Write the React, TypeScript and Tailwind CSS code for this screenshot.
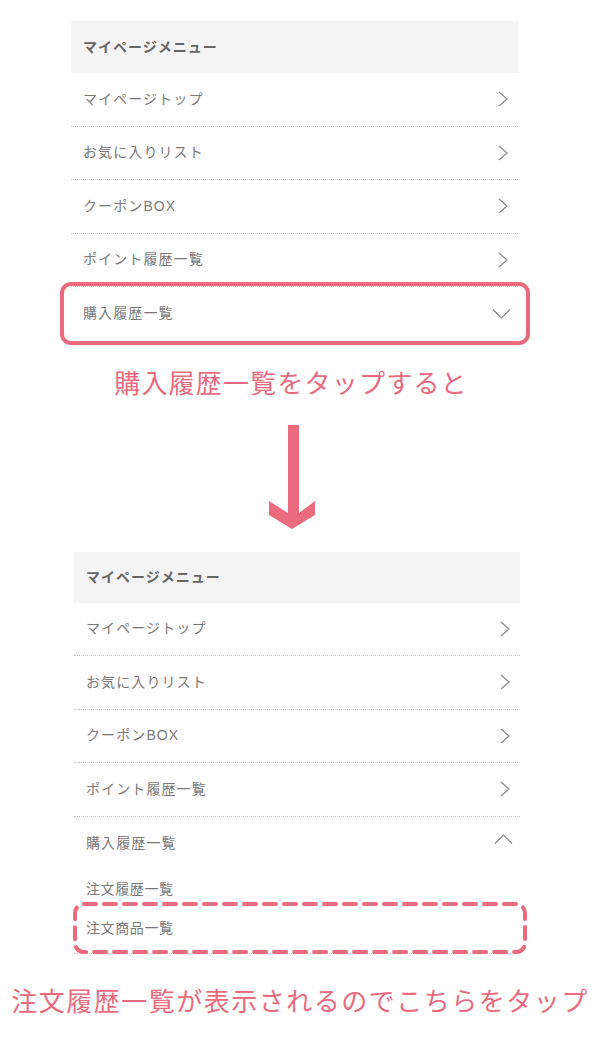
const PINK = "#ec6a7e";

function ChevronRight() {
  return (
    <svg width="12" height="16" viewBox="0 0 12 16" fill="none" className="shrink-0">
      <path d="M2 1 L10 8 L2 15" stroke="#8a8a8a" strokeWidth="1.2" />
    </svg>
  );
}

function ChevronDown() {
  return (
    <svg width="19" height="12" viewBox="0 0 19 12" fill="none" className="shrink-0">
      <path d="M1 1.5 L9.5 10 L18 1.5" stroke="#8a8a8a" strokeWidth="1.2" />
    </svg>
  );
}

function ChevronUp() {
  return (
    <svg width="19" height="12" viewBox="0 0 19 12" fill="none" className="shrink-0">
      <path d="M1 10.5 L9.5 2 L18 10.5" stroke="#8a8a8a" strokeWidth="1.2" />
    </svg>
  );
}

const items = ["マイページトップ", "お気に入りリスト", "クーポンBOX", "ポイント履歴一覧"];

function Row({ label, last, open }: { label: string; last?: boolean; open?: boolean }) {
  return (
    <div
      className={
        "flex h-[53.5px] items-center justify-between pl-3 pr-[9px] " +
        (last ? "" : "border-b border-dotted border-[#c8c8c8]")
      }
    >
      <span className="text-[14px] tracking-[1.1px] text-[#7a7a7a]">{label}</span>
      {open === undefined ? (
        <ChevronRight />
      ) : open ? (
        <span className="-mt-2 -mr-[2px]">
          <ChevronUp />
        </span>
      ) : (
        <span className="-mr-[2px]">
          <ChevronDown />
        </span>
      )}
    </div>
  );
}

function Header({ h }: { h: string }) {
  return (
    <div className={"flex items-center bg-[#f4f4f4] pl-3 " + h}>
      <span className="text-[14px] font-bold tracking-[1px] text-[#666]">マイページメニュー</span>
    </div>
  );
}

export default function App() {
  return (
    <div
      className="min-h-[1038px] w-[600px] bg-white pt-[21px]"
      style={{ fontFamily: '"Liberation Sans", "Noto Sans CJK JP", sans-serif' }}
    >
      {/* before */}
      <div className="ml-[71px] w-[447px]">
        <Header h="h-[52px]" />
        {items.map((t) => (
          <Row key={t} label={t} />
        ))}
        <div className="relative border-b border-dotted border-[#c8c8c8]">
          <Row label="購入履歴一覧" last open={false} />
          <div
            className="pointer-events-none absolute -top-[5px] -bottom-[4px] -left-[11px] -right-[12px] rounded-[11px] border-4"
            style={{ borderColor: PINK }}
          />
        </div>
      </div>

      <div className="mt-[24px] pr-[18px]">
        <p className="text-center text-[26px] leading-[36px] tracking-[1.2px]" style={{ color: PINK }}>
          購入履歴一覧をタップすると
        </p>
      </div>

      <div className="mt-[23px] flex justify-center pr-[17px]">
        <svg width="48" height="105" viewBox="0 0 48 105">
          <path d="M20 0 H31 V88 L47 76 V90 L24 104 L1 90 V76 L20 88 Z" fill={PINK} />
        </svg>
      </div>

      {/* after */}
      <div className="ml-[74px] mt-[22px] w-[446px]">
        <Header h="h-[51px]" />
        {items.map((t) => (
          <Row key={t} label={t} />
        ))}
        <Row label="購入履歴一覧" last open />
        <div className="border-b border-dotted border-[#c8c8c8]">
          <div className="flex h-[38px] items-center pl-3">
            <span className="text-[14px] tracking-[0.6px] text-[#7a7a7a]">注文履歴一覧</span>
          </div>
          <div className="relative flex h-[45px] items-start pl-3 pt-[10px]">
            <span className="text-[14px] tracking-[0.6px] text-[#7a7a7a]">注文商品一覧</span>
            <svg
              className="pointer-events-none absolute -top-[6px] -left-[1px] h-[52px] w-[454px]"
              viewBox="0 0 454 52"
              fill="none"
            >
              <rect
                x="2"
                y="2"
                width="450"
                height="48"
                rx="9"
                stroke={PINK}
                strokeWidth="4"
                strokeDasharray="12 8"
                strokeLinecap="round"
              />
            </svg>
          </div>
        </div>
      </div>

      <div className="mt-[30px]">
        <p className="text-center text-[26px] leading-[36px] tracking-[1.5px]" style={{ color: PINK }}>
          注文履歴一覧が表示されるのでこちらをタップ
        </p>
      </div>
    </div>
  );
}
